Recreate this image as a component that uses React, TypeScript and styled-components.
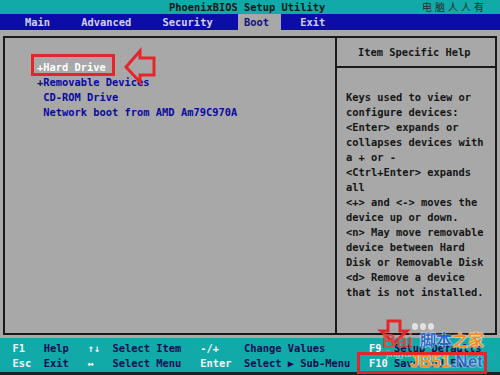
import styled, { createGlobalStyle } from 'styled-components';

const GlobalStyle = createGlobalStyle`
  html, body {
    margin: 0;
    padding: 0;
    background: #000;
  }
  body {
    font-family: "DejaVu Sans Mono", "Liberation Mono", monospace;
    font-size: 10.4px;
    font-weight: bold;
  }
`;

const bootItems = [
  { label: '+Hard Drive', selected: true },
  { label: '+Removable Devices' },
  { label: ' CD-ROM Drive' },
  { label: ' Network boot from AMD Am79C970A' },
];

const helpLines = [
  'Keys used to view or',
  'configure devices:',
  '<Enter> expands or',
  'collapses devices with',
  'a + or -',
  '<Ctrl+Enter> expands',
  'all',
  '<+> and <-> moves the',
  'device up or down.',
  '<n> May move removable',
  'device between Hard',
  'Disk or Removable Disk',
  '<d> Remove a device',
  'that is not installed.',
];

const menus = ['Main', 'Advanced', 'Security', 'Boot', 'Exit'];

function App() {
  return (
    <>
      <GlobalStyle />
      <Screen>
        <TitleBar>
          <span>PhoenixBIOS Setup Utility</span>
          <TitleMark>电脑人人有</TitleMark>
        </TitleBar>
        <MenuBar>
          {menus.map((m) => (
            <MenuItem key={m} $active={m === 'Boot'}>
              {m}
            </MenuItem>
          ))}
        </MenuBar>
        <Body>
          <Box>
            <BootPanel>
              {bootItems.map((item) =>
                item.selected ? (
                  <BootItem key={item.label} $selected>
                    <Selected>
                      {item.label}
                      <PointArrow width="40" height="42" viewBox="0 0 40 42">
                        <polygon
                          points="8,22 22,6 22,13 36,13 36,30 22,30 22,37"
                          fill="none"
                          stroke="#e4262b"
                          strokeWidth="3"
                          strokeLinejoin="miter"
                        />
                      </PointArrow>
                    </Selected>
                  </BootItem>
                ) : (
                  <BootItem key={item.label}>{item.label}</BootItem>
                ),
              )}
            </BootPanel>
            <HelpPanel>
              <HelpHeader>Item Specific Help</HelpHeader>
              <HelpText>
                {helpLines.map((l) => (
                  <div key={l}>{l}</div>
                ))}
              </HelpText>
            </HelpPanel>
          </Box>
        </Body>
        <Footer>
          <FooterGrid>
            <Key>F1</Key>
            <Desc>Help</Desc>
            <Key>↑↓</Key>
            <Desc>Select Item</Desc>
            <Key>-/+</Key>
            <Desc>Change Values</Desc>
            <Key>F9</Key>
            <Desc>Setup Defaults</Desc>
            <Key>Esc</Key>
            <Desc>Exit</Desc>
            <Key>↔</Key>
            <Desc>Select Menu</Desc>
            <Key>Enter</Key>
            <Desc>Select ▶ Sub-Menu</Desc>
            <Key>F10</Key>
            <Desc>Save and Exit</Desc>
          </FooterGrid>
        </Footer>
        <Watermark>
          <DownArrow width="40" height="30" viewBox="0 0 40 30">
            <polygon
              points="13,3 25,3 25,13 32,13 19,25 6,13 13,13"
              fill="none"
              stroke="#e4262b"
              strokeWidth="3"
            />
          </DownArrow>
          <Paw>
            <i />
            <i />
            <i />
          </Paw>
          <BaiText>Bai</BaiText>
          <JingYan>jingyan</JingYan>
          <SiteName>
            <Blue>脚本</Blue>
            <Orange>之家</Orange>
          </SiteName>
          <SiteUrl>
            <Orange>JB51</Orange>
            <Blue>.Net</Blue>
          </SiteUrl>
          <RedFrame />
        </Watermark>
      </Screen>
    </>
  );
}

export default App;

const Screen = styled.div`
  width: 500px;
  height: 375px;
  display: flex;
  flex-direction: column;
  overflow: hidden;
  position: relative;
  background: #a8a8a8;
`;

const TitleBar = styled.div`
  height: 14px;
  line-height: 14px;
  background: #12a9a9;
  color: #161616;
  display: flex;
  align-items: center;
  padding-left: 27ch;
`;

const TitleMark = styled.span`
  margin-left: auto;
  padding-right: 13px;
  font-family: "Noto Sans CJK SC", sans-serif;
  font-size: 10px;
  font-weight: normal;
  letter-spacing: 3px;
  color: #2a2a2a;
`;

const MenuBar = styled.div`
  height: 16px;
  line-height: 16px;
  background: #0c0ca8;
  display: flex;
  gap: 2ch;
  padding-left: 3ch;
`;

type MenuItemProps = { $active?: boolean };
const MenuItem = styled.div<MenuItemProps>`
  padding: 0 2ch 0 1ch;
  color: ${(p) => (p.$active ? '#12127a' : '#d2d2f4')};
  background: ${(p) => (p.$active ? '#a8a8a8' : 'transparent')};
`;

const Body = styled.div`
  flex: 1;
  padding: 6px 3px 3px 3px;
  box-sizing: border-box;
  display: flex;
`;

const Box = styled.div`
  flex: 1;
  border: 2px solid #1a1a1a;
  display: grid;
  grid-template-columns: 1fr 160px;
`;

const BootPanel = styled.div`
  padding: 22px 0 0 32px;
`;

type BootItemProps = { $selected?: boolean };
const BootItem = styled.div<BootItemProps>`
  line-height: 15px;
  white-space: pre;
  color: ${(p) => (p.$selected ? '#ffffff' : '#0a0aa0')};
`;

const Selected = styled.span`
  display: inline-block;
  position: relative;
  &::after {
    content: '';
    position: absolute;
    left: -6px;
    right: -9px;
    top: -6px;
    bottom: -1px;
    border: 3px solid #e4262b;
  }
`;

const PointArrow = styled.svg`
  position: absolute;
  left: calc(100% + 12px);
  top: -15px;
`;

const HelpPanel = styled.div`
  border-left: 2px solid #1a1a1a;
  display: flex;
  flex-direction: column;
  color: #161616;
`;

const HelpHeader = styled.div`
  padding: 7px 0 6px 21px;
  line-height: 15px;
  border-bottom: 2px solid #1a1a1a;
`;

const HelpText = styled.div`
  padding: 22px 0 0 9px;
  line-height: 15px;
  white-space: pre;
`;

const Footer = styled.div`
  height: 37px;
  box-sizing: border-box;
  background: #12a9a9;
  padding-top: 3px;
  border-bottom: 3px solid #162626;
`;

const FooterGrid = styled.div`
  display: grid;
  grid-template-columns: 5ch 7ch 4ch 14ch 7ch 20ch 4ch 1fr;
  padding-left: 2ch;
  line-height: 15px;
  white-space: pre;
`;

const Key = styled.span`
  color: #f6f6f6;
`;

const Desc = styled.span`
  color: #0e0e52;
`;

const Watermark = styled.div`
  position: absolute;
  left: 350px;
  top: 315px;
  width: 150px;
  height: 60px;
  pointer-events: none;
`;

const DownArrow = styled.svg`
  position: absolute;
  left: 25px;
  top: 3px;
`;

const Paw = styled.div`
  position: absolute;
  left: 62px;
  top: 8px;
  display: flex;
  gap: 2px;
  i {
    display: block;
    width: 6px;
    height: 7px;
    border-radius: 50%;
    background: rgba(235, 235, 235, 0.85);
  }
`;

const BaiText = styled.div`
  position: absolute;
  left: 32px;
  top: 16px;
  font-family: "Liberation Sans", Arial, sans-serif;
  font-size: 20px;
  font-weight: bold;
  color: rgba(226, 70, 60, 0.85);
  line-height: 20px;
`;

const JingYan = styled.div`
  position: absolute;
  left: 36px;
  top: 34px;
  font-family: "Liberation Sans", Arial, sans-serif;
  font-size: 9px;
  font-weight: normal;
  color: rgba(240, 240, 240, 0.7);
`;

const SiteName = styled.div`
  position: absolute;
  left: 70px;
  top: 14px;
  font-family: "Noto Sans CJK SC", sans-serif;
  font-size: 16px;
  font-weight: bold;
  line-height: 20px;
  text-shadow: 0 0 2px #fff, 0 0 1px #fff;
`;

const SiteUrl = styled.div`
  position: absolute;
  left: 60px;
  top: 37px;
  font-family: "Liberation Sans", Arial, sans-serif;
  font-size: 17px;
  font-weight: bold;
  line-height: 20px;
  text-shadow: 0 0 2px #fff, 0 0 1px #fff;
`;

const Blue = styled.span`
  color: #2c66c8;
`;

const Orange = styled.span`
  color: #f08c22;
`;

const RedFrame = styled.div`
  position: absolute;
  left: 7px;
  top: 37px;
  width: 130px;
  height: 22px;
  box-sizing: border-box;
  border: 3px solid #e4262b;
`;
